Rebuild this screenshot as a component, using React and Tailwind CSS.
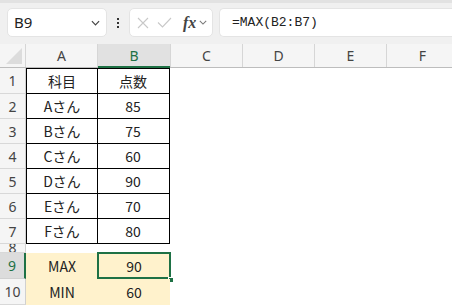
import React from 'react';

const rows = [
  { n: '1', h: 'h-[26px]', a: '科目', b: '点数', table: true, first: true },
  { n: '2', h: 'h-[25px]', a: 'Aさん', b: '85', table: true },
  { n: '3', h: 'h-[25px]', a: 'Bさん', b: '75', table: true },
  { n: '4', h: 'h-[25px]', a: 'Cさん', b: '60', table: true },
  { n: '5', h: 'h-[25px]', a: 'Dさん', b: '90', table: true },
  { n: '6', h: 'h-[25px]', a: 'Eさん', b: '70', table: true },
  { n: '7', h: 'h-[25px]', a: 'Fさん', b: '80', table: true },
  { n: '8', h: 'h-[9px]', a: '', b: '', small: true },
  { n: '9', h: 'h-[26px]', a: 'MAX', b: '90', fill: true, selected: true },
  { n: '10', h: 'h-[26px]', a: 'MIN', b: '60', fill: true },
];

const cols = ['C', 'D', 'E', 'F'];

function Chevron({ className }) {
  return (
    <svg className={className} viewBox="0 0 10 6" fill="none" stroke="currentColor" strokeWidth="1.3">
      <path d="M1 1l4 4 4-4" />
    </svg>
  );
}

function Toolbar() {
  return (
    <div className="h-[44px] bg-[#f0f0f0] border-t-[3px] border-[#e2e2e2] flex items-start pt-[5px] pl-[7px]">
      {/* Name box */}
      <div className="w-[100px] h-[29px] bg-white rounded-[5px] border border-[#e4e4e4] flex items-center justify-between pl-[6px] pr-[6px]">
        <span className="text-[15px] text-[#222] font-['Noto_Sans','Liberation_Sans',sans-serif]">B9</span>
        <Chevron className="w-[9px] h-[6px] text-[#444]" />
      </div>
      <div className="w-[22px] h-[29px] flex flex-col items-center justify-center gap-[2px]">
        <span className="w-[2px] h-[2px] bg-[#333]" />
        <span className="w-[2px] h-[2px] bg-[#333]" />
        <span className="w-[2px] h-[2px] bg-[#333]" />
      </div>
      {/* Formula buttons */}
      <div className="w-[84px] h-[29px] bg-white rounded-[5px] border border-[#e4e4e4] flex items-center pl-[7px] gap-[8px]">
        <svg className="w-[12px] h-[12px] text-[#c8c8c8]" viewBox="0 0 12 12" fill="none" stroke="currentColor" strokeWidth="1.1">
          <path d="M1 1l10 10M11 1L1 11" />
        </svg>
        <svg className="w-[15px] h-[11px] text-[#c8c8c8]" viewBox="0 0 15 11" fill="none" stroke="currentColor" strokeWidth="1.1">
          <path d="M1 5.5l4.5 4.5L14 1" />
        </svg>
        <div className="flex items-center gap-[3px] ml-[3px]">
          <span className="text-[16px] italic font-bold text-[#444] leading-none font-['Liberation_Serif',serif]">fx</span>
          <Chevron className="w-[8px] h-[5px] text-[#777]" />
        </div>
      </div>
      {/* Formula bar */}
      <div className="ml-[6px] flex-1 h-[29px] bg-white rounded-l-[5px] border border-r-0 border-[#e4e4e4] flex items-center pl-[12px]">
        <span className="text-[13px] text-[#222] font-['Liberation_Mono',monospace]">=MAX(B2:B7)</span>
      </div>
    </div>
  );
}

function App() {
  const cell = "font-['Noto_Sans_CJK_JP','Noto_Sans',sans-serif] text-[14px] text-[#222] flex items-center justify-center leading-none";
  return (
    <div className="w-[452px] h-[306px] overflow-hidden bg-white">
      <Toolbar />
      {/* Column headers */}
      <div className="flex h-[24px] bg-[#f5f5f5] border-b border-[#bdbdbd] font-['Noto_Sans','Liberation_Sans',sans-serif] text-[14px] text-[#444]">
        <div className="w-[26px] shrink-0 relative border-r border-[#d6d6d6]">
          <svg className="absolute right-[3px] bottom-[3px] w-[16px] h-[16px]" viewBox="0 0 16 16">
            <path d="M16 0V16H0Z" fill="#dcdcdc" />
          </svg>
        </div>
        <div className="w-[72px] shrink-0 flex items-center justify-center border-r border-[#d6d6d6]">A</div>
        <div className="w-[72px] shrink-0 flex items-center justify-center bg-[#e1e1e1] text-[#1e7145] border-b-2 border-[#1e7145] -mb-px">B</div>
        {cols.map((c) => (
          <div key={c} className="w-[72px] shrink-0 flex items-center justify-center border-l border-[#d6d6d6]">{c}</div>
        ))}
      </div>
      {/* Rows */}
      {rows.map((r) => (
        <div key={r.n} className={`flex ${r.h}`}>
          <div
            className={
              r.selected
                ? "w-[26px] shrink-0 bg-[#dcdcdc] border-r-2 border-[#1e7145] border-b border-b-[#d0d0d0] flex items-center justify-center text-[14px] text-[#1e7145] font-['Noto_Sans','Liberation_Sans',sans-serif] overflow-hidden"
                : r.small
                ? "w-[26px] shrink-0 bg-[#f5f5f5] border-r border-[#d0d0d0] border-b border-b-[#d8d8d8] flex items-end justify-center text-[14px] leading-[8px] text-[#444] font-['Noto_Sans','Liberation_Sans',sans-serif] overflow-hidden"
                : "w-[26px] shrink-0 bg-[#f5f5f5] border-r border-[#d0d0d0] border-b border-b-[#d8d8d8] flex items-center justify-center text-[14px] text-[#444] font-['Noto_Sans','Liberation_Sans',sans-serif] overflow-hidden"
            }
          >
            {r.n}
          </div>
          {r.table ? (
            <>
              <div className={`w-[72px] shrink-0 border-l border-b border-r border-black ${r.first ? 'border-t' : ''} ${cell}`}>{r.a}</div>
              <div className={`w-[73px] shrink-0 border-b border-r border-black -ml-px ${r.first ? 'border-t' : ''} ${cell}`}>{r.b}</div>
            </>
          ) : r.fill ? (
            <>
              <div className={`w-[72px] shrink-0 bg-[#fff2cc] ${cell}`}>{r.a}</div>
              <div className={`w-[72px] shrink-0 bg-[#fff2cc] relative ${cell}`}>
                {r.b}
                {r.selected && (
                  <>
                    <div className="absolute -left-px -top-px w-[74px] h-[27px] border-2 border-[#1e7145]" />
                    <div className="absolute -right-[4px] -bottom-[4px] w-[6px] h-[6px] bg-[#1e7145] border border-white" />
                  </>
                )}
              </div>
            </>
          ) : (
            <div className="w-[144px] shrink-0" />
          )}
        </div>
      ))}
    </div>
  );
}

export default App;
